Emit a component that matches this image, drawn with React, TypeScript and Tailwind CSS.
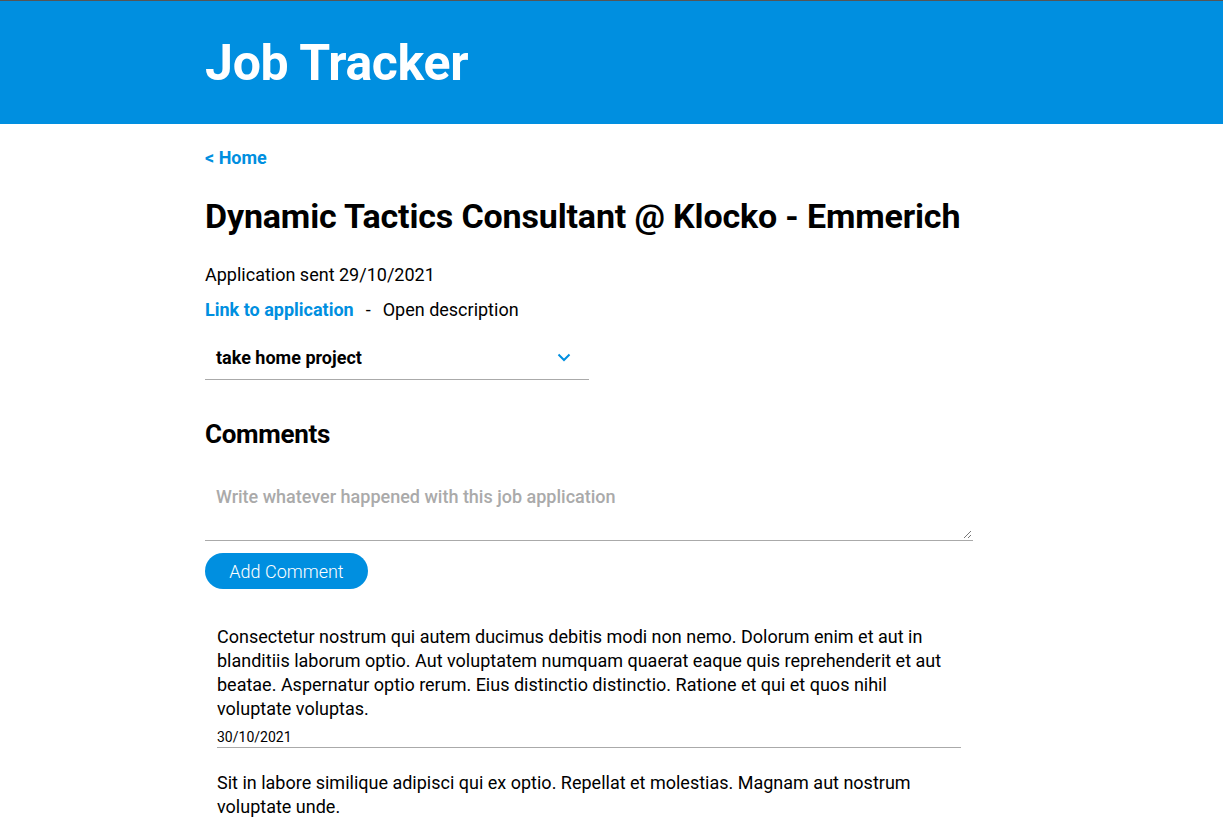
import React from "react";

export default function App() {
  return (
    <div className="min-h-[828px] bg-white font-['Roboto',sans-serif] text-black">
      <header className="h-[124px] border-t border-[#555] bg-[#008fe0]">
        <div className="pl-[205px] pt-[34px]">
          <h1 className="text-[50px] font-bold leading-[56px] text-white tracking-[-0.3px]">Job Tracker</h1>
        </div>
      </header>
      <main className="pl-[205px] w-[973px]">
        <a className="mt-[22px] block text-[18px] font-bold leading-[24px] text-[#008fe0]">&lt; Home</a>
        <h2 className="mt-[26px] text-[34px] font-bold leading-[40px] tracking-[-0.15px]">
          Dynamic Tactics Consultant @ Klocko - Emmerich
        </h2>
        <p className="mt-[27px] text-[18px] leading-[24px]">Application sent 29/10/2021</p>
        <div className="mt-[11px] flex items-center text-[18px] leading-[24px]">
          <a className="font-bold text-[#008fe0]">Link to application</a>
          <span className="ml-[12px]">-</span>
          <span className="ml-[12px]">Open description</span>
        </div>
        <div className="mt-[14px] flex h-[44px] w-[384px] items-center justify-between border-b border-[#aaa] pl-[11px] pr-[18px]">
          <span className="text-[18px] font-bold leading-[24px]">take home project</span>
          <svg width="14" height="9" viewBox="0 0 14 9" fill="none">
            <path d="M1.5 1.5L7 7L12.5 1.5" stroke="#008fe0" strokeWidth="2" />
          </svg>
        </div>
        <h3 className="mt-[39px] text-[26px] font-bold leading-[30px] tracking-[-0.3px]">Comments</h3>
        <div className="relative mt-[28px] h-[64px] w-[768px] border-b border-[#aaa]">
          <span className="absolute left-[11px] top-[8px] text-[18px] font-medium leading-[24px] text-[#aaa]">
            Write whatever happened with this job application
          </span>
          <svg className="absolute bottom-[1px] right-[1px]" width="9" height="9" viewBox="0 0 9 9">
            <path d="M1 8L8 1M5 8L8 5" stroke="#777" strokeWidth="1" />
          </svg>
        </div>
        <button className="mt-[12px] h-[36px] w-[163px] rounded-full bg-[#008fe0] text-[18px] font-light text-white">
          Add Comment
        </button>
        <div className="mt-[36px] w-[756px] pl-[12px]">
          <div className="border-b border-[#aaa] pb-[2px]">
            <p className="text-[18px] leading-[24px]">
              Consectetur nostrum qui autem ducimus debitis modi non nemo. Dolorum enim et aut in blanditiis laborum optio. Aut voluptatem numquam quaerat eaque quis reprehenderit et aut beatae. Aspernatur optio rerum. Eius distinctio distinctio. Ratione et qui et quos nihil voluptate voluptas.
            </p>
            <p className="mt-[8px] text-[14px] leading-[16px]">30/10/2021</p>
          </div>
          <div className="mt-[23px]">
            <p className="text-[18px] leading-[24px]">
              Sit in labore similique adipisci qui ex optio. Repellat et molestias. Magnam aut nostrum voluptate unde.
            </p>
          </div>
        </div>
      </main>
    </div>
  );
}
